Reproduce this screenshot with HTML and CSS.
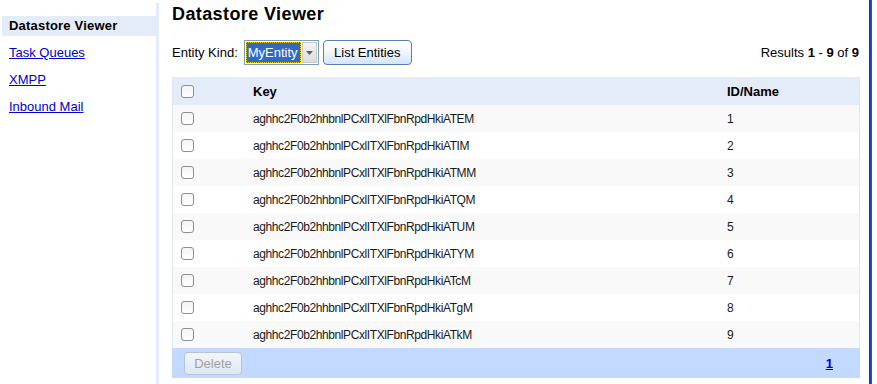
FILE: index.html
```html
<!DOCTYPE html>
<html>
<head>
<meta charset="utf-8">
<link rel="stylesheet" href="styles.css">
</head>
<body>
<div class="page">
  <nav class="sidebar">
    <div class="nav-item current">Datastore Viewer</div>
    <a class="nav-item" href="#">Task Queues</a>
    <a class="nav-item" href="#">XMPP</a>
    <a class="nav-item" href="#">Inbound Mail</a>
  </nav>
  <main class="main">
    <h1 class="title">Datastore Viewer</h1>
    <div class="toolbar">
      <div class="kind">
        <span class="label">Entity Kind:</span>
        <div class="select"><span class="sel-text">MyEntity</span><span class="sel-arrow"><svg width="7" height="4" viewBox="0 0 7 4"><path d="M0 0h7L3.5 4z" fill="#4d6185"/></svg></span></div>
        <button class="btn">List Entities</button>
      </div>
      <div class="results">Results <b>1</b> - <b>9</b> of <b>9</b></div>
    </div>
    <table class="grid">
      <thead>
        <tr><th class="c-check"><span class="cb"></span></th><th class="c-key">Key</th><th class="c-id">ID/Name</th></tr>
      </thead>
      <tbody>
        <tr><td class="c-check"><span class="cb"></span></td><td class="c-key">aghhc2F0b2hhbnlPCxlITXlFbnRpdHkiATEM</td><td>1</td></tr>
        <tr><td class="c-check"><span class="cb"></span></td><td class="c-key">aghhc2F0b2hhbnlPCxlITXlFbnRpdHkiATIM</td><td>2</td></tr>
        <tr><td class="c-check"><span class="cb"></span></td><td class="c-key">aghhc2F0b2hhbnlPCxlITXlFbnRpdHkiATMM</td><td>3</td></tr>
        <tr><td class="c-check"><span class="cb"></span></td><td class="c-key">aghhc2F0b2hhbnlPCxlITXlFbnRpdHkiATQM</td><td>4</td></tr>
        <tr><td class="c-check"><span class="cb"></span></td><td class="c-key">aghhc2F0b2hhbnlPCxlITXlFbnRpdHkiATUM</td><td>5</td></tr>
        <tr><td class="c-check"><span class="cb"></span></td><td class="c-key">aghhc2F0b2hhbnlPCxlITXlFbnRpdHkiATYM</td><td>6</td></tr>
        <tr><td class="c-check"><span class="cb"></span></td><td class="c-key">aghhc2F0b2hhbnlPCxlITXlFbnRpdHkiATcM</td><td>7</td></tr>
        <tr><td class="c-check"><span class="cb"></span></td><td class="c-key">aghhc2F0b2hhbnlPCxlITXlFbnRpdHkiATgM</td><td>8</td></tr>
        <tr><td class="c-check"><span class="cb"></span></td><td class="c-key">aghhc2F0b2hhbnlPCxlITXlFbnRpdHkiATkM</td><td>9</td></tr>
      </tbody>
    </table>
    <div class="footer">
      <button class="btn-del" disabled>Delete</button>
      <a class="pager" href="#">1</a>
    </div>
  </main>
  <div class="edge"></div>
</div>
</body>
</html>
```
FILE: styles.css
```css
html, body {
  margin: 0;
  padding: 0;
  background: #fff;
}
body {
  font-family: "Liberation Sans", Arial, sans-serif;
  font-size: 13px;
  color: #000;
}
.page {
  display: flex;
  height: 384px;
  overflow: hidden;
}
.sidebar {
  width: 154px;
  margin-top: 3px;
  padding-top: 13px;
  padding-left: 2px;
  border-right: 3px solid #e5ecf9;
  display: flex;
  flex-direction: column;
  gap: 7px;
}
.nav-item {
  display: block;
  height: 20px;
  line-height: 20px;
  padding-left: 7px;
  color: #00c;
  text-decoration: underline;
}
.nav-item.current {
  background: #e5ecf9;
  color: #000;
  font-weight: bold;
  text-decoration: none;
  letter-spacing: 0.2px;
}
.main {
  width: 688px;
  padding-left: 13px;
  display: flex;
  flex-direction: column;
}
.title {
  margin: 4px 0 0 0;
  font-size: 18px;
  line-height: 20px;
  font-weight: bold;
  letter-spacing: 0.4px;
}
.toolbar {
  display: flex;
  justify-content: space-between;
  align-items: center;
  margin-top: 16px;
  height: 25px;
}
.kind {
  display: flex;
  align-items: center;
}
.label {
  margin-right: 6px;
}
.select {
  display: flex;
  width: 71px;
  height: 21px;
  border: 1px solid #7f9db9;
  padding: 1px;
  background: #fff;
  box-sizing: content-box;
}
.sel-text {
  background: #316ac5;
  color: #fff;
  outline: 1px dotted #f0d000;
  outline-offset: -1px;
  padding: 0 2px;
  width: 51px;
  line-height: 21px;
}
.sel-arrow {
  flex: 1;
  margin-left: 1px;
  display: flex;
  align-items: center;
  justify-content: center;
  background: linear-gradient(#f4f4f4, #dcdcdc);
  border: 1px solid #c8c8c8;
}
.btn {
  margin-left: 4px;
  height: 25px;
  width: 89px;
  border: 1px solid #5a7fb0;
  border-radius: 4px;
  background: linear-gradient(#ffffff 0%, #f2f7fd 45%, #d3e5fa 100%);
  font-family: "Liberation Sans", Arial, sans-serif;
  font-size: 13px;
  color: #000;
  padding: 0;
}
.results {
  padding-right: 1px;
}
.grid {
  margin-top: 12px;
  width: 688px;
  border-collapse: collapse;
  table-layout: fixed;
  border-left: 1px solid #dde6f5;
  border-right: 1px solid #dde6f5;
}
.grid th, .grid td {
  padding: 0 8px;
  text-align: left;
  height: 27px;
  color: #1a1a1a;
}
.grid td {
  font-size: 12px;
  letter-spacing: -0.4px;
}
.grid th {
  background: #e5ecf9;
  font-weight: bold;
  height: 28px;
  color: #000;
}
.grid .c-check {
  width: 58px;
}
.grid .c-key {
  padding-left: 6px;
}
.grid .c-id {
  width: 124px;
}
.grid tbody tr:nth-child(odd) td {
  background: #f9f9f9;
}
.grid tbody tr:nth-child(even) td {
  background: #fff;
}
.cb {
  display: block;
  width: 11px;
  height: 11px;
  border: 1px solid #8e8f8f;
  border-radius: 3px;
  background: linear-gradient(#f4f4f4, #fff);
}
.footer {
  height: 30px;
  background: #c3d9ff;
  display: flex;
  align-items: center;
  justify-content: space-between;
  padding: 0 27px 0 12px;
}
.btn-del {
  width: 58px;
  height: 23px;
  border: 1px solid #b6c4d8;
  border-radius: 4px;
  background: linear-gradient(#f3f6fa, #dfe7f2);
  color: #a09f9f;
  font-family: "Liberation Sans", Arial, sans-serif;
  font-size: 13px;
  padding: 0;
}
.pager {
  color: #00c;
  font-weight: bold;
  text-decoration: underline;
}
.edge {
  width: 3px;
  margin-left: 9px;
  background: linear-gradient(90deg, #0a2fb8, #2a55e0);
}
```
